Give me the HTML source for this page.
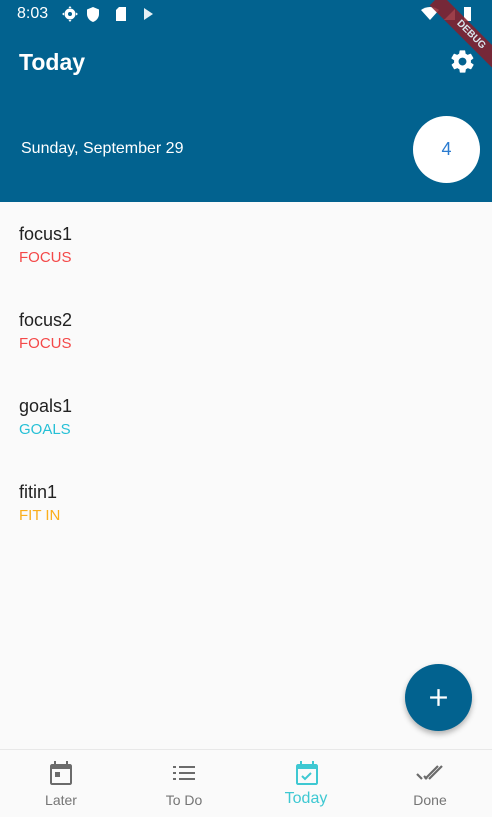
<!DOCTYPE html>
<html><head><meta charset="utf-8"><style>
*{margin:0;padding:0;box-sizing:border-box}
body{width:492px;height:817px;background:#fafafa;font-family:"Liberation Sans",sans-serif;position:relative;overflow:hidden}
.hdr{position:absolute;left:0;top:0;width:492px;height:202px;background:#02628f}
.t{position:absolute;color:#fff}
.item{position:absolute;left:19px}
.item .a{font-size:18px;color:#222}
.item .b{font-size:15px;margin-top:4px}
.nav{position:absolute;left:0;top:749px;width:492px;height:68px;background:#fafafa;border-top:1px solid #e8e8e8}
.lbl{position:absolute;font-size:14px;color:#757575;width:100px;text-align:center;top:42px}
</style></head><body>
<div class="hdr"></div>
<div class="t" style="left:17px;top:5px;font-size:16px">8:03</div>
<svg style="position:absolute;left:62px;top:6px" width="100" height="18" viewBox="0 0 100 18" fill="#fff">
<circle cx="8" cy="8" r="5.5"/><circle cx="8" cy="8" r="2" fill="#02628f"/>
<path d="M8 0l1.5 2h-3zM8 16l1.5-2h-3zM0 8l2 1.5v-3zM16 8l-2 1.5v-3z"/>
<path d="M31 1l6 2.5v4.5c0 4-3 7-6 8-3-1-6-4-6-8V3.5z"/>
<path d="M57 1h7v14h-10V4z"/>
<path d="M82 2l9 6-9 6z" opacity=".9"/>
</svg>
<svg style="position:absolute;left:420px;top:5px" width="60" height="18" viewBox="0 0 60 18" fill="#fff">
<path d="M1 5c5-4 13-4 18 0l-9 10z"/><path d="M24 15l11-11v11z"/><rect x="44" y="2" width="7" height="14"/>
</svg>
<div style="position:absolute;width:100px;height:16px;background:#8b1e2a;transform:rotate(45deg);transform-origin:0 0;color:#fff;font-size:10px;font-weight:bold;text-align:center;line-height:16px;left:441px;top:-6px;opacity:.85">DEBUG</div>
<div class="t" style="left:19px;top:49px;font-size:23px;font-weight:bold">Today</div>
<svg style="position:absolute;left:449px;top:48px" width="27" height="27" viewBox="0 0 24 24" fill="#fff"><path d="M19.4 13c0-.3.1-.6.1-1s0-.7-.1-1l2.1-1.6c.2-.2.2-.4.1-.6l-2-3.5c-.1-.2-.4-.3-.6-.2l-2.5 1c-.5-.4-1.1-.7-1.700-1l-.4-2.600c0-.2-.2-.4-.5-.4h-4c-.2 0-.4.2-.5.4l-.4 2.6c-.6.3-1.2.6-1.7 1l-2.5-1c-.2-.1-.5 0-.6.2l-2 3.5c-.1.2-.1.5.1.6L4.6 11c0 .3-.1.7-.1 1s0 .7.1 1l-2.1 1.6c-.2.2-.2.4-.1.6l2 3.5c.1.2.4.3.6.2l2.5-1c.5.4 1.1.7 1.7 1l.4 2.6c0 .2.2.4.5.4h4c.2 0 .5-.2.5-.4l.4-2.6c.6-.3 1.2-.6 1.7-1l2.5 1c.2.1.5 0 .6-.2l2-3.5c.1-.2.1-.5-.1-.6zM12 15.5c-1.9 0-3.5-1.6-3.5-3.5s1.6-3.5 3.5-3.5 3.5 1.6 3.5 3.5-1.6 3.5-3.5 3.5z"/></svg>
<div class="t" style="left:21px;top:140px;font-size:16px">Sunday, September 29</div>
<div style="position:absolute;left:413px;top:116px;width:67px;height:67px;border-radius:50%;background:#fff;color:#2a7bd0;font-size:18px;text-align:center;line-height:67px">4</div>
<div class="item" style="top:224px"><div class="a">focus1</div><div class="b" style="color:#f44848">FOCUS</div></div>
<div class="item" style="top:310px"><div class="a">focus2</div><div class="b" style="color:#f44848">FOCUS</div></div>
<div class="item" style="top:396px"><div class="a">goals1</div><div class="b" style="color:#26c0d6">GOALS</div></div>
<div class="item" style="top:482px"><div class="a">fitin1</div><div class="b" style="color:#fbae1b">FIT IN</div></div>
<div style="position:absolute;left:405px;top:664px;width:67px;height:67px;border-radius:50%;background:#02628f;box-shadow:0 3px 6px rgba(0,0,0,.3)"></div>
<svg style="position:absolute;left:428px;top:687px" width="21" height="21" viewBox="0 0 20 20"><path d="M10 2v16M2 10h16" stroke="#fff" stroke-width="2.2"/></svg>
<div class="nav">
<svg style="position:absolute;left:49px;top:11px" width="24" height="25" viewBox="0 0 24 25" fill="#6b6b6b"><path d="M5 0h2v3h10V0h2v3h2c1 0 2 1 2 2v17c0 1-1 2-2 2H3c-1 0-2-1-2-2V5c0-1 1-2 2-2h2zM3 8v14h18V8z"/><rect x="6" y="11" width="5" height="5"/></svg>
<svg style="position:absolute;left:172px;top:15px" width="24" height="16" viewBox="0 0 24 16" fill="#6b6b6b"><rect x="1" y="1" width="3" height="2"/><rect x="7" y="1" width="16" height="2"/><rect x="1" y="7" width="3" height="2"/><rect x="7" y="7" width="16" height="2"/><rect x="1" y="13" width="3" height="2"/><rect x="7" y="13" width="16" height="2"/></svg>
<svg style="position:absolute;left:295px;top:11px" width="24" height="25" viewBox="0 0 24 25" fill="#3ec8d2"><path d="M5 0h2v3h10V0h2v3h2c1 0 2 1 2 2v17c0 1-1 2-2 2H3c-1 0-2-1-2-2V5c0-1 1-2 2-2h2zM3 8v14h18V8z"/><path d="M7 15l3 3 6-6" stroke="#3ec8d2" stroke-width="2" fill="none"/></svg>
<svg style="position:absolute;left:416px;top:14px" width="28" height="18" viewBox="0 0 28 18"><path d="M1 10l5 5M9 15L22 2M13 15L26 2M8 12l3 3" stroke="#6b6b6b" stroke-width="2.2" fill="none"/></svg>
<div class="lbl" style="left:11px">Later</div>
<div class="lbl" style="left:134px">To Do</div>
<div class="lbl" style="left:256px;top:40px;font-size:16px;color:#3ec8d2">Today</div>
<div class="lbl" style="left:380px">Done</div>
</div>
</body></html>
